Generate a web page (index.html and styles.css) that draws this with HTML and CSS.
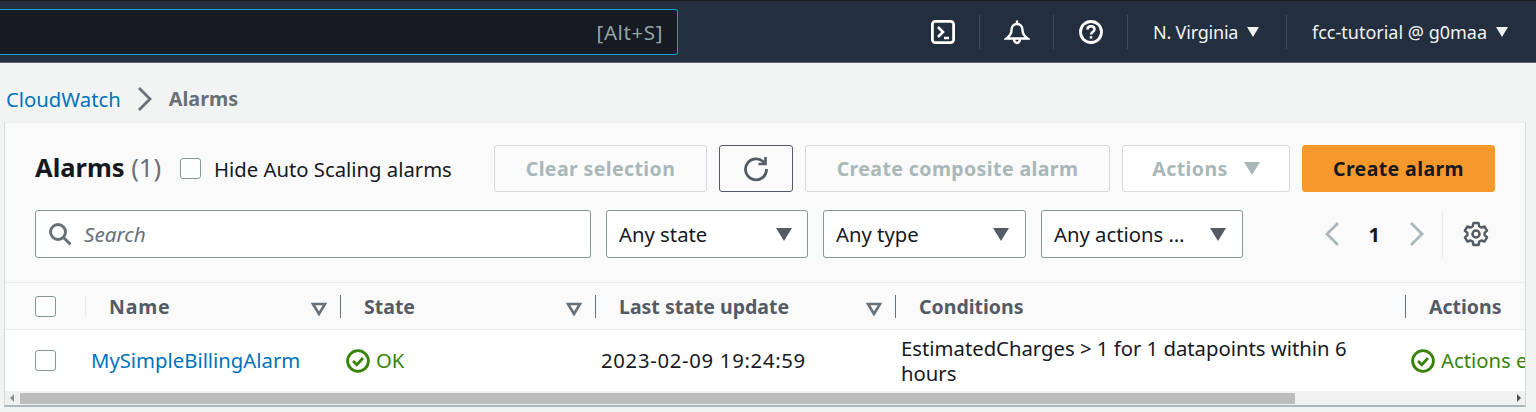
FILE: index.html
```html
<!DOCTYPE html>
<html lang="en">

<head>
  <meta charset="UTF-8">
  <title>CloudWatch Alarms</title>
  <link rel="stylesheet" href="styles.css">
</head>

<body>
  <header class="topbar">
    <div class="global-search"><span class="shortcut">[Alt+S]</span></div>
    <div class="nav-items">
      <div class="nav-icon">
        <svg width="26" height="26" viewBox="0 0 26 26" fill="none" stroke="#fff" stroke-width="2.800">
          <rect x="2.400" y="2.400" width="21.200" height="21.200" rx="3"/>
          <path d="M8 8l5 5-5 5M14 19h5" stroke-width="2.600"/>
        </svg>
      </div>
      <div class="nav-icon">
        <svg width="26" height="26" viewBox="0 0 26 26" fill="none" stroke="#fff" stroke-width="2.400">
          <path d="M13 1.500v3.500M13 5c-3.500 0-5.500 2.500-5.500 6 0 4-1.500 6-5 8.500h21c-3.500-2.500-5-4.500-5-8.500 0-3.500-2-6-5.500-6zM10 20c0 2.200 1.300 4 3 4s3-1.800 3-4"/>
        </svg>
      </div>
      <div class="nav-icon">
        <svg width="26" height="26" viewBox="0 0 26 26" fill="none" stroke="#fff" stroke-width="2.800">
          <circle cx="13" cy="13" r="10.500"/>
          <path d="M9.500 10.500c0-2 1.500-3.200 3.500-3.200s3.500 1.200 3.500 3c0 2.700-3.500 2.700-3.500 5.200" stroke-width="2.500"/>
          <path d="M13 17.200v2.400" stroke-width="2.600"/>
        </svg>
      </div>
      <div class="nav-menu region">N. Virginia <span class="nav-caret"></span></div>
      <div class="nav-menu account">fcc-tutorial @ g0maa <span class="nav-caret"></span></div>
    </div>
  </header>

  <nav class="breadcrumb">
    <a class="crumb-link">CloudWatch</a>
    <svg class="crumb-sep" width="16" height="24" viewBox="0 0 16 24" fill="none" stroke="#687078" stroke-width="2.800">
      <path d="M2 1l11 11L2 23"/>
    </svg>
    <span class="crumb-current">Alarms</span>
  </nav>

  <section class="panel">
    <div class="panel-head">
      <div class="toolbar">
        <h1 class="title">Alarms <span class="count">(1)</span></h1>
        <label class="hide-toggle"><span class="checkbox"></span><span class="toggle-text">Hide Auto Scaling alarms</span></label>
        <div class="buttons">
          <button class="btn clear-btn">Clear selection</button>
          <button class="btn refresh-btn">
            <svg width="28" height="28" viewBox="0 0 28 28" fill="none" stroke="#545b64" stroke-width="2.800">
              <path d="M22 7.500A10.500 10.500 0 1 0 24.500 14"/>
              <path d="M23.500 2v7h-7" stroke-width="2.600"/>
            </svg>
          </button>
          <button class="btn composite-btn">Create composite alarm</button>
          <button class="btn actions-btn">Actions <span class="caret caret-light"></span></button>
          <button class="btn primary-btn">Create alarm</button>
        </div>
      </div>
      <div class="filters">
        <div class="search">
          <svg width="24" height="24" viewBox="0 0 24 24" fill="none" stroke="#687078" stroke-width="3">
            <circle cx="10" cy="10" r="7.500"/>
            <path d="M15.500 15.500l7 7"/>
          </svg>
          <span class="search-text">Search</span>
        </div>
        <div class="select state-select">Any state <span class="caret"></span></div>
        <div class="select type-select">Any type <span class="caret"></span></div>
        <div class="select actions-select">Any actions … <span class="caret"></span></div>
        <div class="pager">
          <svg width="16" height="26" viewBox="0 0 16 26" fill="none" stroke="#aab7b8" stroke-width="2.800"><path d="M14 2L3 13l11 11"/></svg>
          <span class="page-num">1</span>
          <svg width="16" height="26" viewBox="0 0 16 26" fill="none" stroke="#aab7b8" stroke-width="2.800"><path d="M2 2l11 11L2 24"/></svg>
        </div>
        <div class="settings">
          <svg width="26" height="26" viewBox="0 0 26 26" fill="none" stroke="#545b64" stroke-width="2.500">
            <circle cx="13" cy="13" r="3.500"/>
            <path d="M10.500 2h5l.7 3.300 2.200 1.200 3.200-1 2.400 4.200-2.400 2.200v2.200l2.400 2.200-2.400 4.200-3.200-1-2.200 1.200-.7 3.300h-5l-.7-3.300-2.200-1.200-3.200 1-2.400-4.200 2.400-2.200v-2.200L1.900 9.700l2.400-4.200 3.200 1 2.200-1.200z" stroke-linejoin="round"/>
          </svg>
        </div>
      </div>
    </div>

    <div class="table-head table-row">
      <div class="cell check-cell"><span class="checkbox"></span></div>
      <div class="cell head-cell first"><span class="head-label name-label">Name</span><svg class="sort" width="16" height="14" viewBox="0 0 16 14"><path d="M2 2h12l-6 10z" fill="none" stroke="#687078" stroke-width="2.600"/></svg></div>
      <div class="cell head-cell"><span class="head-label">State</span><svg class="sort" width="16" height="14" viewBox="0 0 16 14"><path d="M2 2h12l-6 10z" fill="none" stroke="#687078" stroke-width="2.600"/></svg></div>
      <div class="cell head-cell"><span class="head-label">Last state update</span><svg class="sort" width="16" height="14" viewBox="0 0 16 14"><path d="M2 2h12l-6 10z" fill="none" stroke="#687078" stroke-width="2.600"/></svg></div>
      <div class="cell head-cell"><span class="head-label">Conditions</span></div>
      <div class="cell head-cell"><span class="head-label">Actions</span></div>
    </div>

    <div class="table-body table-row">
      <div class="cell check-cell"><span class="checkbox"></span></div>
      <div class="cell body-cell"><a class="alarm-link">MySimpleBillingAlarm</a></div>
      <div class="cell body-cell status">
        <svg width="24" height="24" viewBox="0 0 24 24" fill="none" stroke="#37830a" stroke-width="2.800"><circle cx="12" cy="12" r="10.400"/><path d="M7 12l3.800 3.800L17 9"/></svg>OK
      </div>
      <div class="cell body-cell date-cell">2023-02-09 19:24:59</div>
      <div class="cell body-cell">EstimatedCharges &gt; 1 for 1 datapoints within 6 hours</div>
      <div class="cell body-cell status nowrap">
        <svg width="24" height="24" viewBox="0 0 24 24" fill="none" stroke="#37830a" stroke-width="2.800"><circle cx="12" cy="12" r="10.400"/><path d="M7 12l3.800 3.800L17 9"/></svg>Actions enabled
      </div>
    </div>

    <div class="scrollbar">
      <span class="arrow arrow-left"></span>
      <div class="thumb"></div>
      <span class="arrow arrow-right"></span>
    </div>
  </section>
</body>

</html>
```

FILE: styles.css
```css
* {
  box-sizing: border-box;
}

html,
body {
  height: 412px;
  overflow: hidden;
}

body {
  margin: 0;
  font-family: "Noto Sans", sans-serif;
  font-size: 20.300px;
  color: #16191f;
  background-color: #f2f3f3;
}

/* top bar */
.topbar {
  height: 63px;
  display: flex;
  align-items: center;
  justify-content: space-between;
  background-color: #232f3e;
  border-top: 1px solid #16191f;
  border-bottom: 1px solid #5a6572;
}

.global-search {
  width: 678px;
  height: 46px;
  margin-top: 1px;
  display: flex;
  align-items: center;
  justify-content: flex-end;
  padding-right: 14px;
  background-color: #161a23;
  border: 1px solid #1b9fd0;
  border-left: none;
  border-radius: 0 3px 3px 0;
}

.shortcut {
  color: #95a5a6;
  font-size: 20.500px;
  letter-spacing: 0.600px;
}

.nav-items {
  height: 34px;
  display: flex;
  align-items: center;
}

.nav-icon {
  width: 74px;
  height: 34px;
  display: flex;
  align-items: center;
  justify-content: center;
  border-right: 1px solid #414d5c;
}

.nav-menu {
  height: 34px;
  display: flex;
  align-items: center;
  gap: 9px;
  color: #f2f3f3;
  font-size: 18px;
}

.region {
  width: 159px;
  padding-left: 25px;
  border-right: 1px solid #414d5c;
  letter-spacing: -0.200px;
}

.account {
  width: 249px;
  padding-left: 25px;
}

.nav-caret {
  width: 0;
  height: 0;
  border-left: 6px solid transparent;
  border-right: 6px solid transparent;
  border-top: 10px solid #f2f3f3;
}

/* breadcrumb */
.breadcrumb {
  height: 59px;
  display: flex;
  align-items: center;
  gap: 16px;
  padding: 12px 0 0 6px;
}

.crumb-link {
  color: #0073bb;
}

.crumb-current {
  color: #687078;
  font-size: 19.800px;
  font-weight: 700;
}

/* panel */
.panel {
  width: 1522px;
  height: 285px;
  margin-left: 4px;
  overflow: hidden;
  background-color: #fafafa;
  border: 1px solid #d5dbdb;
  border-top-color: #eaeded;
  border-bottom: 2px solid #aab7b8;
}

.panel-head {
  height: 160px;
  padding: 22px 30px 0 30px;
  border-bottom: 1px solid #eaeded;
}

.toolbar {
  height: 47px;
  display: flex;
  align-items: center;
}

.title {
  width: 145px;
  margin: -4px 0 0 0;
  font-size: 25.500px;
  font-weight: 700;
  white-space: nowrap;
}

.count {
  color: #687078;
  font-weight: 400;
}

.checkbox {
  width: 21px;
  height: 21px;
  flex: none;
  display: block;
  background-color: #fff;
  border: 1.500px solid #879596;
  border-radius: 3px;
}

.hide-toggle {
  width: 314px;
  display: flex;
  align-items: center;
  gap: 13px;
}

.toggle-text {
  padding-top: 1px;
}

.buttons {
  display: flex;
  gap: 12px;
}

.btn {
  height: 47px;
  display: flex;
  align-items: center;
  justify-content: center;
  gap: 16px;
  padding: 0;
  font-family: inherit;
  font-size: 19.500px;
  font-weight: 700;
  letter-spacing: 0.400px;
  color: #aab7b8;
  background-color: #fff;
  border: 1px solid #d5dbdb;
  border-radius: 3px;
}

.clear-btn {
  width: 213px;
  background-color: #fafafa;
}

.refresh-btn {
  width: 74px;
  background-color: #fafafa;
  border-color: #545b64;
}

.composite-btn {
  width: 305px;
  background-color: #fafafa;
}

.actions-btn {
  width: 168px;
}

.primary-btn {
  width: 193px;
  color: #16191f;
  background-color: #f7982d;
  border-color: #f7982d;
}

.caret {
  width: 0;
  height: 0;
  border-left: 8px solid transparent;
  border-right: 8px solid transparent;
  border-top: 13px solid #545b64;
}

.caret-light {
  border-top-color: #aab7b8;
}

.filters {
  height: 48px;
  margin-top: 18px;
  display: flex;
  align-items: center;
}

.search {
  width: 556px;
  height: 48px;
  display: flex;
  align-items: center;
  gap: 12px;
  padding-left: 12px;
  background-color: #fff;
  border: 1px solid #879596;
  border-radius: 3px;
}

.search-text {
  font-size: 20.700px;
  color: #687078;
  font-style: italic;
}

.select {
  width: 202px;
  height: 48px;
  display: flex;
  align-items: center;
  justify-content: space-between;
  padding: 0 16px 0 12px;
  background-color: #fff;
  border: 1px solid #879596;
  border-radius: 3px;
}

.state-select {
  margin-left: 15px;
  padding-right: 15px;
}

.type-select {
  width: 203px;
  margin-left: 15px;
}

.actions-select {
  margin-left: 15px;
}

.pager {
  width: 199px;
  display: flex;
  align-items: center;
  justify-content: flex-end;
  gap: 29px;
  padding-right: 17px;
  font-size: 20px;
  font-weight: 700;
}

.settings {
  height: 48px;
  padding-left: 20px;
  display: flex;
  align-items: center;
  border-left: 1px solid #eaeded;
}

/* table */
.table-row {
  display: grid;
  grid-template-columns: 80px 255px 255px 300px 510px 240px;
  width: 1640px;
}

.table-head {
  height: 47px;
  align-items: center;
  border-bottom: 1px solid #eaeded;
}

.cell {
  min-width: 0;
}

.check-cell {
  padding-left: 30px;
}

.head-cell {
  height: 23px;
  display: flex;
  align-items: center;
  justify-content: space-between;
  padding: 0 13px 0 23px;
  color: #545b64;
  font-size: 19.500px;
  font-weight: 700;
  border-left: 1px solid #687078;
}

.head-cell.first {
  border-left-color: #eaeded;
}

.name-label {
  letter-spacing: 0.800px;
}

.sort {
  margin-top: 6px;
}

.table-body {
  height: 61px;
  align-items: center;
  background-color: #fff;
}

.body-cell {
  padding: 0 24px 0 6px;
  line-height: 25px;
}

.date-cell {
  letter-spacing: 0.700px;
}

.alarm-link {
  color: #0073bb;
}

.status {
  display: flex;
  align-items: center;
  gap: 6px;
  color: #37830a;
}

.nowrap {
  white-space: nowrap;
}

/* horizontal scrollbar */
.scrollbar {
  height: 14px;
  display: flex;
  align-items: center;
  padding: 0 4px 0 5px;
  background-color: #f0f0f0;
}

.thumb {
  width: 1275px;
  height: 11px;
  background-color: #bdbdbd;
}

.arrow {
  width: 0;
  height: 0;
  border-top: 4px solid transparent;
  border-bottom: 4px solid transparent;
}

.arrow-left {
  margin-right: 6px;
  border-right: 4px solid #8f8f8f;
}

.arrow-right {
  margin-left: auto;
  border-left: 4px solid #505050;
}
```
